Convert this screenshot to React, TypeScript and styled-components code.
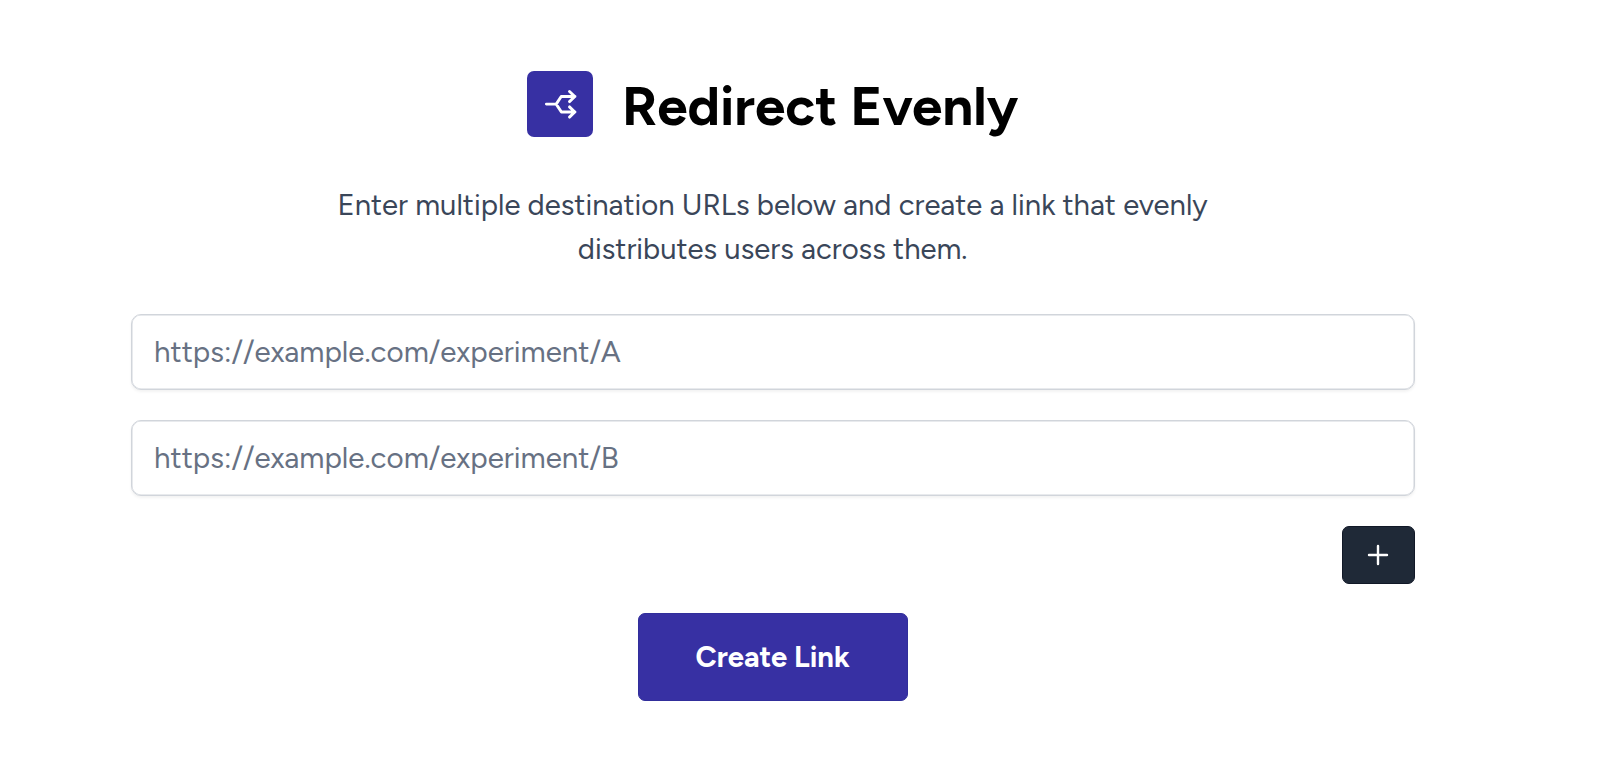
import React, { useState } from "react"
import styled, { createGlobalStyle } from "styled-components"

const GlobalStyle = createGlobalStyle`
  *,
  *::before,
  *::after {
    box-sizing: border-box;
  }

  body {
    margin: 0;
    background: #fff;
    font-family: Figtree, Lato, sans-serif;
  }
`

const Container = styled.main`
  width: 1284px;
  margin-left: 130.6px;
  padding-top: 71px;
  display: flex;
  flex-direction: column;
  align-items: center;
`

const Header = styled.header`
  display: flex;
  align-items: center;
  gap: 29px;
  height: 66px;
`

const Logo = styled.div`
  flex: none;
  width: 66px;
  height: 66px;
  border-radius: 7px;
  background: #3730a3;

  svg {
    display: block;
  }
`

const Title = styled.h1`
  margin: 3px 0 0;
  color: #000;
  font-size: 54.7px;
  font-weight: 700;
  line-height: 60px;
  white-space: nowrap;
`

const Text = styled.p`
  margin: 46px 0 0;
  width: 900px;
  color: #3a4659;
  font-size: 29.25px;
  line-height: 44px;
  text-align: center;
`

const Form = styled.form`
  width: 100%;
  margin-top: 43px;
  display: flex;
  flex-direction: column;
  gap: 30px;
`

const Input = styled.input`
  width: 100%;
  height: 76px;
  padding: 0 22.5px 1px;
  border: 1px solid #d1d5db;
  border-radius: 10px;
  background: #fff;
  box-shadow: inset 0 0 0 0.5px #d1d5db, 0 2px 3px rgba(0, 0, 0, 0.05);
  color: #374151;
  font-family: inherit;
  font-size: 29.5px;
  outline: none;

  &::placeholder {
    color: #677183;
    opacity: 1;
  }
`

const Button = styled.button`
  display: flex;
  align-items: center;
  justify-content: center;
  padding: 0;
  border: 1px solid;
  border-radius: 7px;
  color: #fff;
  font-family: inherit;
  cursor: pointer;
`

const AddButton = styled(Button)`
  align-self: flex-end;
  width: 73px;
  height: 58px;
  border-color: #111827;
  background: #1f2937;
`

const SubmitButton = styled(Button)`
  align-self: center;
  width: 270px;
  height: 88px;
  margin-top: -1px;
  padding-bottom: 1px;
  border-color: #312e9b;
  background: #3730a3;
  font-size: 29.2px;
  font-weight: 700;
`

const SplitIcon = () => (
  <svg width="66" height="66" viewBox="0 0 66 66" fill="none">
    <path
      d="M19.4 33.1h9.8l5-7.6H48M29.2 33.1l5.2 7.9H48M42.5 20.5l5.3 5-5.3 5.1M42.5 35.9l5.3 5.1-5.3 5.1"
      stroke="#fff"
      strokeWidth="2.9"
      strokeLinecap="round"
      strokeLinejoin="round"
    />
  </svg>
)

const PlusIcon = () => (
  <svg width="22" height="22" viewBox="0 0 22 22" fill="none">
    <path
      d="M11 2v18M2 11h18"
      stroke="#fff"
      strokeWidth="2.4"
      strokeLinecap="round"
    />
  </svg>
)

const App = () => {
  const [urls, setUrls] = useState(["", ""])

  const updateUrl = (index: number, value: string) =>
    setUrls(urls.map((url, i) => (i === index ? value : url)))

  return (
    <>
      <GlobalStyle />
      <Container>
        <Header>
          <Logo>
            <SplitIcon />
          </Logo>
          <Title>Redirect Evenly</Title>
        </Header>
        <Text>
          Enter multiple destination URLs below and create a link that evenly
          <br />
          distributes users across them.
        </Text>
        <Form onSubmit={e => e.preventDefault()}>
          {urls.map((url, i) => (
            <Input
              key={i}
              value={url}
              placeholder={`https://example.com/experiment/${String.fromCharCode(
                65 + i
              )}`}
              onChange={e => updateUrl(i, e.target.value)}
            />
          ))}
          <AddButton
            type="button"
            aria-label="Add URL"
            onClick={() => setUrls([...urls, ""])}
          >
            <PlusIcon />
          </AddButton>
          <SubmitButton type="submit">Create Link</SubmitButton>
        </Form>
      </Container>
    </>
  )
}

export default App
